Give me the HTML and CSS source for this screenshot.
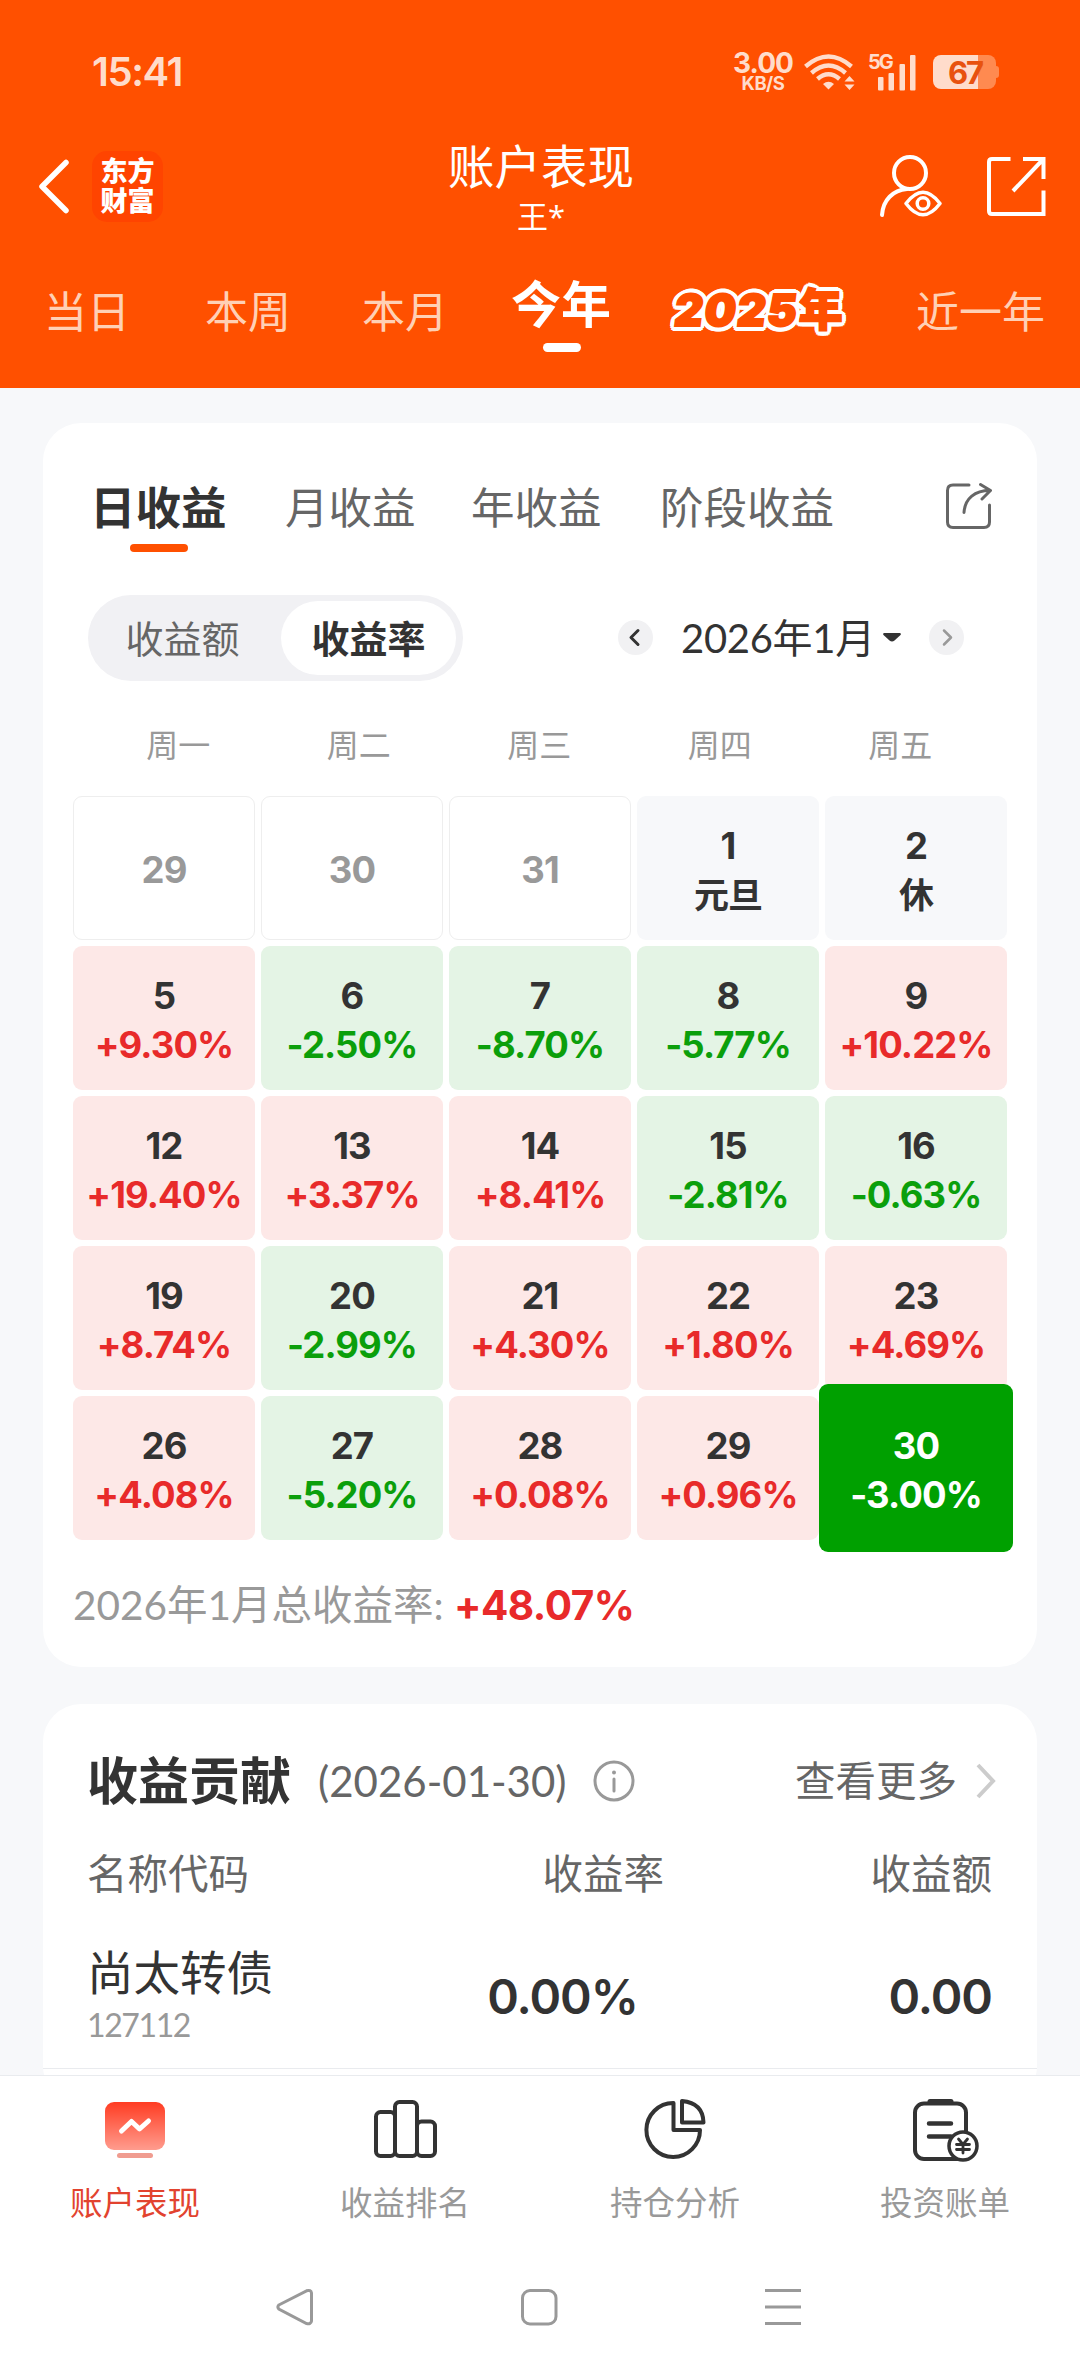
FILE: index.html
```html
<!DOCTYPE html>
<html lang="zh-CN">

<head>
    <meta charset="UTF-8">
    <meta name="viewport" content="width=device-width, initial-scale=1.0">
    <title>账户表现</title>
    <link rel="stylesheet" href="styles.css">
</head>

<body>
    <header class="header">
        <!-- Status bar -->
        <div class="status">
            <span class="time">15:41</span>
            <div class="status-icons">
                <div class="speed"><b>3.00</b><span>KB/S</span></div>
                <svg class="wifi" width="52" height="37" viewBox="0 0 52 37" fill="none" stroke="#ffdccb" stroke-width="4.4">
                    <path d="M1.500 12.500Q24.500 -7.500 47.500 12.500M7.500 19Q24.500 4 41.500 19M13.500 25Q24.500 15.500 35.500 25" />
                    <path d="M24.500 35.500l-5.500-5.500q5.500-4.500 11 0z" fill="#ffdccb" stroke="none" />
                    <path d="M45.500 22l5 5.500h-10zM45.500 36l-5-5.500h10z" fill="#ffdccb" stroke="none" />
                </svg>
                <div class="signal">
                    <span>5G</span>
                    <svg width="38" height="37" viewBox="0 0 38 37" fill="#ffdccb">
                        <rect x="0" y="23" width="5.500" height="13.500" rx="1" />
                        <rect x="10.500" y="19" width="5.500" height="17.500" rx="1" />
                        <rect x="21.500" y="10" width="5.500" height="26.500" rx="1" />
                        <rect x="32" y="1" width="5.500" height="35.500" rx="1" />
                    </svg>
                </div>
                <div class="battery"><span>67</span></div>
            </div>
        </div>

        <!-- Title bar -->
        <div class="titlebar">
            <div class="titlebar-side">
                <svg width="34" height="56" viewBox="0 0 34 56" fill="none" stroke="#fff" stroke-width="5.500" stroke-linecap="round" stroke-linejoin="round">
                    <path d="M30 4.500L6 28.500L30 52.500" />
                </svg>
                <div class="logo">东方<br>财富</div>
            </div>
            <div class="title">
                <h1>账户表现</h1>
                <p>王*</p>
            </div>
            <div class="titlebar-side right">
                <svg width="64" height="64" viewBox="0 0 64 64" fill="none" stroke="#fff" stroke-width="4" stroke-linecap="round">
                    <circle cx="32" cy="19" r="16" />
                    <path d="M4 61C5 46 15 36 29 35" />
                    <path d="M28 49.500Q45 27 62 49.500Q45 72 28 49.500z" stroke-width="3.500" stroke-linejoin="round" />
                    <circle cx="45" cy="49.500" r="5.800" stroke-width="3.500" />
                </svg>
                <svg width="60" height="60" viewBox="0 0 60 60" fill="none" stroke="#fff" stroke-width="4">
                    <path d="M24.500 3H6Q3 3 3 6V55Q3 58 6 58H57.500V34.500" />
                    <path d="M37 3H57.500V23M57 3.500L27 35" />
                </svg>
            </div>
        </div>

        <!-- Period tabs -->
        <nav class="periods">
            <span>当日</span>
            <span>本周</span>
            <span>本月</span>
            <span class="active">今年</span>
            <span class="special"><i>2025</i>年</span>
            <span>近一年</span>
        </nav>
    </header>

    <main>
        <section class="card calendar-card">
            <div class="tabs">
                <span class="active">日收益</span>
                <span>月收益</span>
                <span>年收益</span>
                <span>阶段收益</span>
                <svg width="48" height="48" viewBox="0 0 48 48" fill="none" stroke="#666" stroke-width="3" stroke-linecap="round" stroke-linejoin="round">
                    <path d="M24 3H8Q2.500 3 2.500 8.500V40Q2.500 45.500 8 45.500H39Q44.500 45.500 44.500 40V23" />
                    <path d="M19 30.500C20 16 30 8.500 45 8.500M35.500 2.500L45.500 8.500L37 17" />
                </svg>
            </div>

            <div class="controls">
                <div class="toggle">
                    <span>收益额</span>
                    <span class="active">收益率</span>
                </div>
                <div class="month">
                    <svg width="35" height="35" viewBox="0 0 35 35" fill="none" stroke-linecap="round" stroke-linejoin="round" stroke-width="3">
                        <circle cx="17.500" cy="17.500" r="17.500" fill="#f1f1f3" />
                        <path d="M20 10.500L13 17.500L20 24.500" stroke="#333" />
                    </svg>
                    <span class="month-name">2026年1月</span>
                    <svg class="caret" width="18" height="9" viewBox="0 0 18 9">
                        <path d="M1 0H17Q18.500 .5 17.500 2L11.500 7.500Q9 9.500 6.500 7.500L.5 2Q-.5 .5 1 0z" fill="#333" />
                    </svg>
                    <svg width="35" height="35" viewBox="0 0 35 35" fill="none" stroke-linecap="round" stroke-linejoin="round" stroke-width="2.500">
                        <circle cx="17.500" cy="17.500" r="17.500" fill="#f1f1f3" />
                        <path d="M15 10.500L22 17.500L15 24.500" stroke="#999" />
                    </svg>
                </div>
            </div>

            <div class="weekdays">
                <span>周一</span><span>周二</span><span>周三</span><span>周四</span><span>周五</span>
            </div>

            <!-- Daily return grid -->
            <div class="calendar">
                <div class="day out">29</div>
                <div class="day out">30</div>
                <div class="day out">31</div>
                <div class="day rest">1<span>元旦</span></div>
                <div class="day rest">2<span>休</span></div>

                <div class="day up">5<span>+9.30%</span></div>
                <div class="day down">6<span>-2.50%</span></div>
                <div class="day down">7<span>-8.70%</span></div>
                <div class="day down">8<span>-5.77%</span></div>
                <div class="day up">9<span>+10.22%</span></div>

                <div class="day up">12<span>+19.40%</span></div>
                <div class="day up">13<span>+3.37%</span></div>
                <div class="day up">14<span>+8.41%</span></div>
                <div class="day down">15<span>-2.81%</span></div>
                <div class="day down">16<span>-0.63%</span></div>

                <div class="day up">19<span>+8.74%</span></div>
                <div class="day down">20<span>-2.99%</span></div>
                <div class="day up">21<span>+4.30%</span></div>
                <div class="day up">22<span>+1.80%</span></div>
                <div class="day up">23<span>+4.69%</span></div>

                <div class="day up">26<span>+4.08%</span></div>
                <div class="day down">27<span>-5.20%</span></div>
                <div class="day up">28<span>+0.08%</span></div>
                <div class="day up">29<span>+0.96%</span></div>
                <div class="day selected">30<span>-3.00%</span></div>
            </div>

            <p class="total">2026年1月总收益率: <b>+48.07%</b></p>
        </section>

        <section class="card contribution">
            <div class="contribution-head">
                <h2>收益贡献</h2>
                <span class="date">(2026-01-30)</span>
                <svg width="42" height="42" viewBox="0 0 42 42" fill="none" stroke="#999" stroke-width="3" stroke-linecap="round">
                    <circle cx="21" cy="21" r="19" />
                    <path d="M21 19V31" />
                    <circle cx="21" cy="12.500" r="2" fill="#999" stroke="none" />
                </svg>
                <span class="more">查看更多</span>
                <svg width="22" height="38" viewBox="0 0 22 38" fill="none" stroke="#ccc" stroke-width="4">
                    <path d="M3 3L18 19L3 35" />
                </svg>
            </div>
            <div class="row row-head">
                <span>名称代码</span>
                <span>收益率</span>
                <span>收益额</span>
            </div>
            <div class="row stock">
                <div>
                    <p class="name">尚太转债</p>
                    <p class="code">127112</p>
                </div>
                <span class="num">0.00%</span>
                <span class="num">0.00</span>
            </div>
        </section>
    </main>

    <!-- Bottom navigation -->
    <nav class="bottom-nav">
        <div class="active">
            <svg width="66" height="64" viewBox="0 0 66 64" fill="none">
                <defs>
                    <linearGradient id="screen" x1="0" y1="0" x2="0" y2="1">
                        <stop offset="0" stop-color="#ff3c22" />
                        <stop offset="1" stop-color="#ff9c8e" />
                    </linearGradient>
                </defs>
                <rect x="3" y="4" width="60" height="48" rx="9" fill="url(#screen)" />
                <path d="M19.500 33L29.500 23.500L37.500 31L46.500 23" stroke="#fff" stroke-width="5" stroke-linecap="round" stroke-linejoin="round" />
                <rect x="15" y="55" width="36" height="5" rx="2.500" fill="#f09c90" />
            </svg>
            <span>账户表现</span>
        </div>
        <div>
            <svg width="66" height="64" viewBox="0 0 66 64" fill="none" stroke="#333" stroke-width="4">
                <rect x="4" y="14" width="19" height="44" rx="4.500" />
                <rect x="23" y="4" width="22" height="54" rx="4.500" />
                <rect x="45" y="23.500" width="18" height="34.500" rx="4.500" />
            </svg>
            <span>收益排名</span>
        </div>
        <div>
            <svg width="66" height="64" viewBox="0 0 66 64" fill="none" stroke="#333" stroke-width="4" stroke-linejoin="round">
                <path d="M31.500 5V32H58A26.800 27 0 1 1 31.500 5z" />
                <path d="M40 3V24.500H61.500Q61 5 40 3z" />
            </svg>
            <span>持仓分析</span>
        </div>
        <div>
            <svg width="70" height="64" viewBox="0 0 70 64" fill="none" stroke="#333" stroke-width="4" stroke-linecap="round">
                <rect x="5" y="5.500" width="51" height="55.500" rx="9" />
                <path d="M20 3.500H41" stroke-width="5" />
                <path d="M19 25.500H41M19 38.500H41" stroke-width="4.500" />
                <circle cx="53" cy="48" r="14" fill="#fff" stroke-width="3.500" />
                <path d="M48.500 41L53 46.500L57.500 41M53 46.500V55M46.500 46.500H59.500M46.500 51.500H59.500" stroke-width="2.800" />
            </svg>
            <span>投资账单</span>
        </div>
    </nav>

    <!-- System navigation -->
    <footer class="sysbar">
        <svg width="38" height="38" viewBox="0 0 38 38"><path d="M2.800 17L30.500 2.800Q35 1.500 35.500 5V33Q35 36.500 30.500 35.500L2.800 21Q1 19 2.800 17z" /></svg>
        <svg width="38" height="38" viewBox="0 0 38 38"><rect x="2.500" y="2.500" width="33.500" height="33.500" rx="7.500" /></svg>
        <svg width="38" height="38" viewBox="0 0 38 38"><path d="M1 2.500H37M1 19H37M1 35.500H37" /></svg>
    </footer>
</body>

</html>
```

FILE: styles.css
```css
* {
    box-sizing: border-box;
}

body {
    margin: 0;
    width: 1080px;
    height: 2373px;
    display: flex;
    flex-direction: column;
    overflow: hidden;
    font-family: Lato, "Noto Sans CJK SC", sans-serif;
    font-weight: 400;
    background-color: #f7f8fa;
    color: #333;
}

h1,
h2,
p {
    margin: 0;
    font-weight: inherit;
}

svg {
    display: block;
    flex: none;
}

/* header */
.header {
    height: 388px;
    flex: none;
    background-color: #ff5000;
    color: #fff;
}

.status {
    display: flex;
    justify-content: space-between;
    height: 140px;
    padding: 42px 81px 0 92px;
    color: #ffdccb;
    font-family: Inter, sans-serif;
}

.time {
    height: 60px;
    line-height: 60px;
    font-size: 40px;
    font-weight: 600;
    letter-spacing: -1.400px;
}

.status-icons {
    display: flex;
    align-items: center;
    height: 60px;
}

.speed {
    display: flex;
    flex-direction: column;
    align-items: center;
    width: 60px;
    margin-right: 11px;
}

.speed b {
    font-size: 28px;
    line-height: 23px;
    font-weight: 650;
    letter-spacing: -1px;
}

.speed span {
    font-size: 18.500px;
    line-height: 17px;
    font-weight: 650;
    letter-spacing: -0.500px;
}

.wifi {
    margin-right: 12px;
}

.signal {
    display: flex;
    position: relative;
    padding-left: 10px;
    margin-right: 17px;
}

.signal span {
    position: absolute;
    left: 0;
    top: 0;
    font-size: 20px;
    line-height: 16px;
    font-weight: 700;
    letter-spacing: -2px;
}

.battery {
    position: relative;
    width: 63px;
    height: 34px;
    margin-right: 3px;
    border-radius: 8px;
    background: linear-gradient(to right, #ffdccb 45px, #ff8a50 45px);
    color: #e8520f;
    font-size: 31px;
    font-weight: 650;
    line-height: 35px;
    text-align: center;
    letter-spacing: -2px;
}

.battery span {
    padding-left: 1px;
}

.battery::after {
    content: "";
    position: absolute;
    right: -3px;
    top: 11px;
    width: 3px;
    height: 12px;
    border-radius: 0 3px 3px 0;
    background-color: #ff8a50;
}

.titlebar {
    display: flex;
    justify-content: space-between;
    height: 120px;
    padding: 0 34px 0 36px;
}

.titlebar-side {
    display: flex;
    align-items: center;
    gap: 22px;
    width: 300px;
    height: 92px;
}

.titlebar-side.right {
    justify-content: flex-end;
    gap: 44px;
}

.logo {
    width: 71px;
    height: 71px;
    padding-top: 5px;
    border-radius: 15px;
    background-color: #ff4400;
    font-size: 27px;
    font-weight: 900;
    line-height: 30px;
    text-align: center;
}

.title {
    text-align: center;
}

.title h1 {
    font-size: 46.500px;
    line-height: 52px;
}

.title p {
    font-family: "Open Sans", "Noto Sans CJK SC", sans-serif;
    font-size: 31px;
    line-height: 48px;
}

.periods {
    display: grid;
    grid-template-columns: 161px 157px 149px 156px 249px auto;
    padding-left: 44px;
    font-size: 43px;
    line-height: 104px;
    white-space: nowrap;
    color: #ffd0b5;
}

.periods .active {
    position: relative;
    color: #fff;
    font-size: 50px;
    line-height: 88px;
    font-weight: 700;
}

.periods .active::after {
    content: "";
    position: absolute;
    left: 32px;
    top: 83px;
    width: 38px;
    height: 9px;
    border-radius: 5px;
    background-color: #fff;
}

/* orange lettering with a white outline */
.periods .special {
    padding-left: 8px;
    color: #ff5000;
    font-family: Inter, "Noto Sans CJK SC", sans-serif;
    font-size: 44px;
    font-weight: 900;
    line-height: 100px;
    letter-spacing: 1.500px;
    -webkit-text-stroke: 2px #ff5000;
    text-shadow: 5px 0 #fff, -5px 0 #fff, 0 5px #fff, 0 -5px #fff,
        3.500px 3.500px #fff, -3.500px 3.500px #fff, 3.500px -3.500px #fff, -3.500px -3.500px #fff,
        2px 4.500px #fff, -2px 4.500px #fff, 2px -4.500px #fff, -2px -4.500px #fff,
        4.500px 2px #fff, -4.500px 2px #fff, 4.500px -2px #fff, -4.500px -2px #fff;
}

.periods .special i {
    display: inline-block;
    font-style: normal;
    transform: skewX(-7deg);
}

/* cards */
main {
    flex: 1;
    overflow: hidden;
    padding: 35px 43px 0;
}

.card {
    background-color: #fff;
    border-radius: 38px;
}

.calendar-card {
    height: 1244px;
    padding: 48px 30px 0;
}

.tabs {
    display: grid;
    grid-template-columns: 193px 186px 189px 285px auto;
    padding-left: 19px;
    height: 124px;
    font-size: 43.500px;
    line-height: 73px;
    white-space: nowrap;
    color: #666;
}

.tabs .active {
    position: relative;
    margin-left: -2px;
    color: #333;
    font-size: 45.500px;
    font-weight: 700;
}

.tabs .active::after {
    content: "";
    position: absolute;
    left: 40px;
    top: 73px;
    width: 58px;
    height: 8px;
    border-radius: 4px;
    background-color: #ff5000;
}

.tabs svg {
    margin-top: 11px;
}

.controls {
    display: flex;
    justify-content: space-between;
    padding: 0 43px 0 15px;
}

.toggle {
    display: flex;
    width: 375px;
    height: 86px;
    padding: 6px 7px 6px 0;
    border-radius: 43px;
    background-color: #f1f1f4;
    font-size: 38px;
    line-height: 74px;
    text-align: center;
    color: #666;
}

.toggle span {
    width: 193px;
    padding-right: 4px;
}

.toggle .active {
    width: 175px;
    padding: 0;
    border-radius: 37px;
    background-color: #fff;
    color: #333;
    font-weight: 700;
}

.month {
    display: flex;
    align-items: center;
    height: 84px;
    font-size: 40px;
}

.month-name {
    width: 190px;
    margin: 2px 12px 0 28px;
    line-height: 60px;
    letter-spacing: -0.300px;
    white-space: nowrap;
}

.caret {
    margin-right: 28px;
}

.weekdays {
    display: grid;
    grid-template-columns: repeat(5, 180.500px);
    padding-left: 15px;
    margin-top: 39px;
    font-size: 32px;
    line-height: 50px;
    text-align: center;
    color: #999;
}

.calendar {
    display: grid;
    grid-template-columns: repeat(5, 182px);
    grid-auto-rows: 144px;
    gap: 6px;
    margin-top: 26px;
}

.day {
    display: flex;
    flex-direction: column;
    align-items: center;
    justify-content: center;
    padding-top: 5px;
    border-radius: 9px;
    font-family: Inter, "Noto Sans CJK SC", sans-serif;
    font-size: 36.500px;
    font-weight: 650;
    line-height: 49px;
    letter-spacing: -0.900px;
    white-space: nowrap;
}

.day.out {
    border: 1px solid #eee;
    color: #999;
}

.day.rest {
    background-color: #f7f8fa;
}

.day.rest span {
    font-size: 35px;
    font-weight: 700;
}

.day.up {
    background-color: #fde8e7;
}

.day.up span {
    color: #e82a2a;
}

.day.down {
    background-color: #e4f4e5;
}

.day.down span {
    color: #0b9f0b;
}

.day.selected {
    z-index: 1;
    margin: -12px -6px;
    background-color: #00a000;
    color: #fff;
}

.total {
    margin-top: 33px;
    font-size: 40.500px;
    line-height: 64px;
    color: #999;
}

.total b {
    font-family: Inter, sans-serif;
    font-weight: 700;
    letter-spacing: -0.500px;
    color: #e82a2a;
}

/* contribution list */
.contribution {
    height: 400px;
    margin-top: 37px;
}

.contribution-head {
    display: flex;
    align-items: center;
    height: 154px;
    padding: 0 40px 0 44px;
    font-size: 40.500px;
    line-height: 60px;
    color: #666;
}

.contribution-head h2 {
    font-size: 51px;
    font-weight: 700;
    color: #333;
    margin-right: 27px;
}

.contribution-head .date {
    width: 275px;
    font-size: 42px;
    white-space: nowrap;
}

.contribution-head .more {
    margin-left: auto;
    margin-right: 18px;
}

.row {
    display: grid;
    grid-template-columns: 330px 1fr 328px;
    align-items: center;
    padding: 0 45px 0 44px;
}

.row-head {
    height: 32px;
    font-size: 40.500px;
    line-height: 32px;
    color: #666;
}

.row-head span + span,
.num {
    text-align: right;
}

.stock {
    height: 179px;
    padding-top: 34px;
    border-bottom: 1px solid #e9ebee;
}

.stock .name {
    font-size: 46.500px;
    line-height: 56px;
}

.stock .code {
    font-size: 32px;
    line-height: 48px;
    letter-spacing: -3px;
    letter-spacing: -1.400px;
    padding-top: 1px;
    color: #999;
}

.stock .num {
    font-family: Inter, sans-serif;
    font-size: 48px;
    font-weight: 600;
    letter-spacing: -1px;
}

.stock .num:nth-child(2) {
    padding-right: 26px;
}

/* bottom bars */
.bottom-nav {
    display: grid;
    grid-template-columns: repeat(4, 270px);
    flex: none;
    height: 185px;
    padding-top: 22px;
    border-top: 1px solid #e9ebee;
    background-color: #fff;
    font-size: 32.500px;
    line-height: 44px;
    color: #999;
}

.bottom-nav div {
    display: flex;
    flex-direction: column;
    align-items: center;
    gap: 19px;
}

.bottom-nav .active {
    color: #e2432f;
}

.sysbar {
    display: flex;
    justify-content: center;
    gap: 206px;
    flex: none;
    height: 113px;
    padding: 28px 3px 0 0;
    background-color: #fff;
}

.sysbar svg {
    fill: none;
    stroke: #999;
    stroke-width: 3;
}
```
